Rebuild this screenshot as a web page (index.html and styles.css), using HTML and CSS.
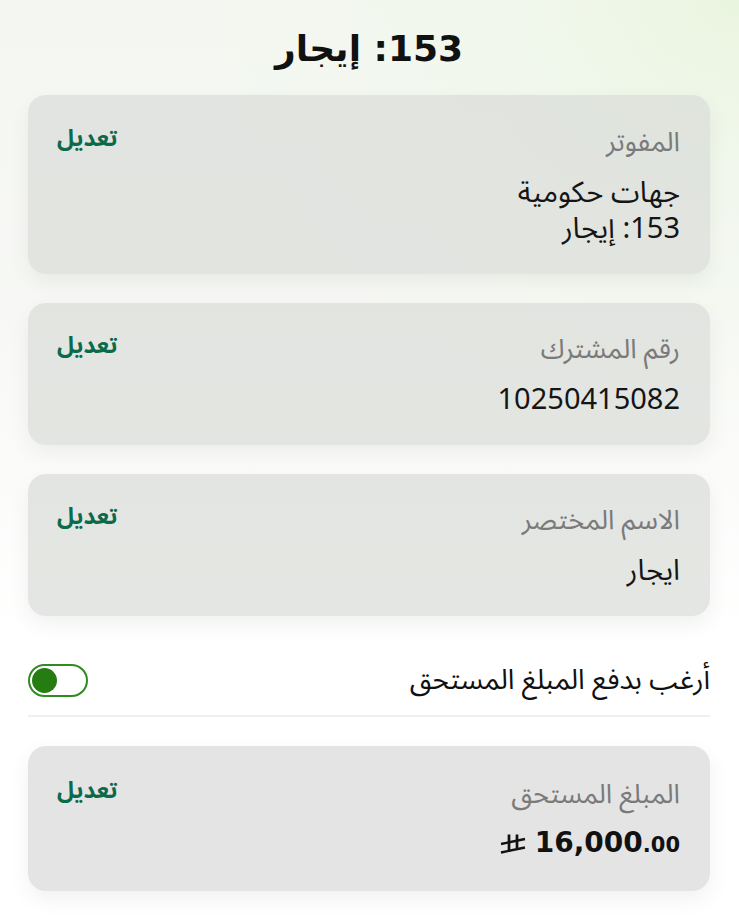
FILE: index.html
```html
<!DOCTYPE html>
<html lang="ar" dir="rtl">
<head>
	<meta charset="utf-8">
	<title>153: إيجار</title>
	<link rel="stylesheet" href="styles.css">
</head>
<body>
	<h1 class="title">153: إيجار</h1>

	<div class="card card-biller">
		<div class="card-text">
			<div class="label">المفوتر</div>
			<div class="value">جهات حكومية<br>153: إيجار</div>
		</div>
		<a class="edit">تعديل</a>
	</div>

	<div class="card">
		<div class="card-text">
			<div class="label">رقم المشترك</div>
			<div class="value">10250415082</div>
		</div>
		<a class="edit">تعديل</a>
	</div>

	<div class="card">
		<div class="card-text">
			<div class="label">الاسم المختصر</div>
			<div class="value">ايجار</div>
		</div>
		<a class="edit">تعديل</a>
	</div>

	<div class="toggle-row">
		<span class="toggle-text">أرغب بدفع المبلغ المستحق</span>
		<span class="switch"><span class="knob"></span></span>
	</div>

	<div class="card card-amount">
		<div class="card-text">
			<div class="label">المبلغ المستحق</div>
			<div class="amount">
				<span class="num">16,000<small>.00</small></span>
				<svg class="riyal" width="26" height="21" viewBox="0 0 26 21">
					<!-- new riyal sign -->
					<path d="M9 0.5 V16" fill="none" stroke="#111" stroke-width="2.7"/>
					<path d="M17 0.5 V14" fill="none" stroke="#111" stroke-width="2.7"/>
					<path d="M1 10 L25 5" fill="none" stroke="#111" stroke-width="2.4"/>
					<path d="M1 18.5 L25 13.5" fill="none" stroke="#111" stroke-width="2.4"/>
				</svg>
			</div>
		</div>
		<a class="edit">تعديل</a>
	</div>
</body>
</html>
```

FILE: styles.css
```css
html {
	background: #ffffff;
}
body {
	margin: 0;
	padding: 0 29px 30px 28px;
	min-height: 922px;
	box-sizing: border-box;
	font-family: "Noto Sans Arabic", "DejaVu Sans", sans-serif;
	color: #111111;
	background:
		radial-gradient(ellipse 520px 420px at 100% 0%, #eaf5e0 0%, rgba(240,248,234,0.6) 45%, rgba(255,255,255,0) 100%),
		linear-gradient(180deg, #f4f7f1 0px, #f7f8f5 300px, #ffffff 640px);
}
.title {
	margin: 0;
	padding: 21px 0 18px;
	text-align: center;
	font-family: "DejaVu Sans", sans-serif;
	font-size: 36px;
	font-weight: bold;
	line-height: 56px;
	color: #111111;
}
.card {
	display: flex;
	justify-content: space-between;
	align-items: flex-start;
	background: rgba(218, 220, 216, 0.72);
	border-radius: 18px;
	padding: 29px 30px 0 29px;
	height: 142px;
	box-sizing: border-box;
	margin-bottom: 29px;
	box-shadow: 0 8px 22px rgba(0, 0, 0, 0.06);
}
.card-biller {
	height: 179px;
	padding-top: 30px;
}
.card-amount {
	height: 145px;
	padding-top: 31px;
	background: #e4e4e4;
}
.label {
	font-size: 27px;
	line-height: 36px;
	color: #7a7a7a;
}
.value {
	margin-top: 14px;
	font-size: 29px;
	line-height: 36px;
	color: #151515;
}
.edit {
	font-size: 23px;
	font-weight: bold;
	line-height: 30px;
	color: #0b6a4b;
	margin-top: -1px;
}
.toggle-row {
	display: flex;
	justify-content: space-between;
	align-items: center;
	height: 70px;
	margin-bottom: 29px;
	border-bottom: 2px solid #efefef;
}
.toggle-text {
	font-size: 28px;
	color: #111111;
}
.switch {
	display: flex;
	align-items: center;
	justify-content: flex-end;
	width: 60px;
	height: 33px;
	box-sizing: border-box;
	border: 2px solid #2f8a1f;
	border-radius: 17px;
	padding: 0 2px;
	background: #ffffff;
}
.knob {
	width: 25px;
	height: 25px;
	border-radius: 50%;
	background: #257d12;
}
.amount {
	display: flex;
	align-items: center;
	gap: 9px;
	margin-top: 10px;
	direction: ltr;
	justify-content: flex-end;
	flex-direction: row-reverse;
}
.num {
	font-family: "DejaVu Sans", sans-serif;
	font-size: 28px;
	font-weight: bold;
	line-height: 40px;
	color: #111111;
}
.num small {
	font-size: 21px;
}
```
